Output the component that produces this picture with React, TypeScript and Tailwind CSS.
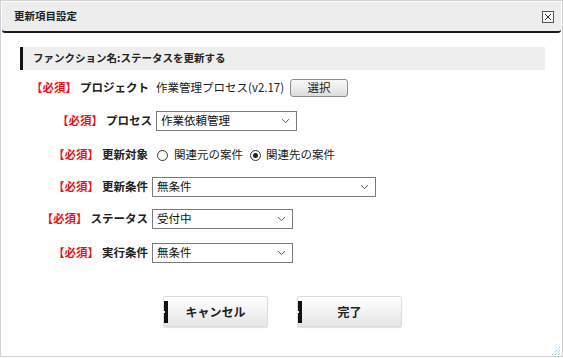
import React from "react";

const font = { fontFamily: '"Noto Sans CJK JP", "Noto Sans", sans-serif' };

function Chevron() {
  return (
    <svg width="9" height="6" viewBox="0 0 9 6" className="shrink-0">
      <path d="M1 1.2 L4.5 4.6 L8 1.2" fill="none" stroke="#555" strokeWidth="1" />
    </svg>
  );
}

function Select({ value, w }: { value: string; w: string }) {
  return (
    <div
      className={`${w} h-[20px] border border-[#7a7a7a] bg-white flex items-center justify-between pl-[4px] pr-[6px] text-[11.5px] text-[#111] leading-none`}
    >
      <span>{value}</span>
      <Chevron />
    </div>
  );
}

function Label({ name, w }: { name: string; w: string }) {
  return (
    <div className={`${w} shrink-0 flex justify-end items-center text-[11.5px] font-bold leading-none`}>
      <span className="text-[#e3141b]">【必須】</span>
      <span className="ml-[3px] text-[#222]">{name}</span>
    </div>
  );
}

function Radio({ checked }: { checked?: boolean }) {
  return (
    <span className="w-[11px] h-[11px] rounded-full border border-[#333] bg-white flex items-center justify-center shrink-0">
      {checked && <span className="w-[5px] h-[5px] rounded-full bg-[#222]" />}
    </span>
  );
}

function BigButton({ text }: { text: string }) {
  return (
    <div className="relative w-[105px] h-[31px] border border-[#dcdcdc] rounded-[2px] bg-gradient-to-b from-white to-[#e6e6e6] shadow-[0_1px_1px_rgba(0,0,0,0.12)] flex items-center justify-center text-[12px] font-bold text-[#222]">
      <span className="absolute left-[0px] top-[4px] bottom-[3px] w-[4px] bg-[#111]" />
      <span className="absolute left-[-1px] top-[14px] w-[2px] h-[2px] bg-white" />
      {text}
    </div>
  );
}

export default function App() {
  return (
    <div style={font} className="w-[563px] h-[358px] bg-white relative overflow-hidden">
      <div className="w-[563px] h-[357px] border border-[#d2d2d2] flex flex-col">
        {/* title bar */}
        <div className="mx-[1px] mt-[1px] h-[31px] bg-[#ededed] border-b-2 border-[#1b1b1b] rounded-b-[3px] flex items-center justify-between pl-[12px] pr-[7px]">
          <span className="text-[10.5px] font-bold text-[#222] leading-none">更新項目設定</span>
          <span className="w-[12px] h-[12px] border border-[#555] bg-[#f6f6f6] flex items-center justify-center">
            <svg width="8" height="8" viewBox="0 0 8 8">
              <path d="M1 1 L7 7 M7 1 L1 7" stroke="#333" strokeWidth="1" />
            </svg>
          </span>
        </div>

        {/* section header */}
        <div className="ml-[19px] mr-[17px] mt-[14px] h-[23px] bg-[#eeeeee] border-l-[3px] border-[#111] flex items-center pl-[10px]">
          <span className="text-[10.5px] font-bold text-[#222] leading-none">ファンクション名:ステータスを更新する</span>
        </div>

        {/* rows */}
        <div className="flex flex-col">
          <div className="flex items-center h-[20px] mt-[8px]">
            <Label name="プロジェクト" w="w-[148px]" />
            <span className="ml-[7px] text-[11.5px] text-[#222] leading-none">作業管理プロセス(v2.17)</span>
            <div className="ml-[6px] w-[58px] h-[18px] border border-[#8f8f8f] rounded-[3px] bg-gradient-to-b from-[#fafafa] to-[#dcdcdc] flex items-center justify-center text-[11.5px] text-[#222] leading-none">
              選択
            </div>
          </div>

          <div className="flex items-center h-[20px] mt-[13px]">
            <Label name="プロセス" w="w-[151px]" />
            <div className="ml-[4px]">
              <Select value="作業依頼管理" w="w-[141px]" />
            </div>
          </div>

          <div className="flex items-center h-[20px] mt-[14px]">
            <Label name="更新対象" w="w-[147px]" />
            <div className="ml-[9px] flex items-center text-[11.5px] text-[#222] leading-none">
              <Radio />
              <span className="ml-[6px]">関連元の案件</span>
              <span className="ml-[7px]"><Radio checked /></span>
              <span className="ml-[5px]">関連先の案件</span>
            </div>
          </div>

          <div className="flex items-center h-[21px] mt-[11px]">
            <Label name="更新条件" w="w-[147px]" />
            <div className="ml-[4px]">
              <Select value="無条件" w="w-[224px]" />
            </div>
          </div>

          <div className="flex items-center h-[20px] mt-[12px]">
            <Label name="ステータス" w="w-[147px]" />
            <div className="ml-[4px]">
              <Select value="受付中" w="w-[141px]" />
            </div>
          </div>

          <div className="flex items-center h-[20px] mt-[14px]">
            <Label name="実行条件" w="w-[147px]" />
            <div className="ml-[4px]">
              <Select value="無条件" w="w-[141px]" />
            </div>
          </div>
        </div>

        {/* buttons */}
        <div className="flex justify-center gap-[29px] mt-[33px] pl-[2px]">
          <BigButton text="キャンセル" />
          <BigButton text="完了" />
        </div>
      </div>

      {/* resize grip */}
      <svg className="absolute right-[2px] bottom-[2px]" width="10" height="10" viewBox="0 0 10 10">
        <path d="M9 1 L1 9 M9 4 L4 9 M9 7 L7 9" stroke="#6bb6ea" strokeWidth="1" strokeDasharray="1 1" />
      </svg>
    </div>
  );
}
